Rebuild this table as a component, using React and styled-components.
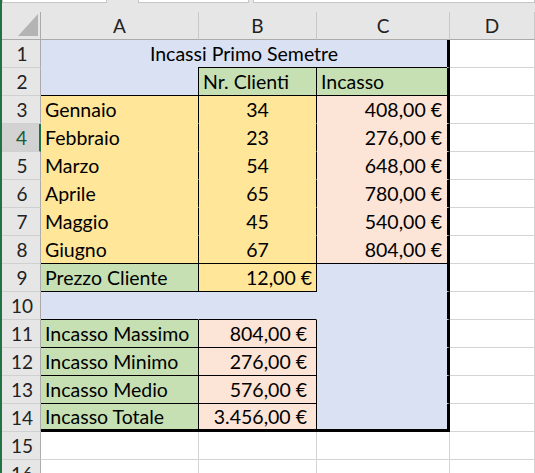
import React from 'react'
import styled, { createGlobalStyle } from 'styled-components'

const BLUE = '#d9e1f2'
const GREEN = '#c6e0b4'
const YELLOW = '#ffe699'
const PEACH = '#fce4d6'
const GRID = '#d4d4d4'
const K = '#000'
const THICK = 'thick'

const GlobalStyle = createGlobalStyle`
  html, body {
    margin: 0;
    padding: 0;
    background: #fff;
    overflow: hidden;
  }
  body {
    font-family: Lato, "Open Sans", sans-serif;
  }
`

const Window = styled.div`
  display: flex;
  width: 535px;
  height: 473px;
  overflow: hidden;
`

const GreenEdge = styled.div`
  width: 2px;
  flex-shrink: 0;
  background: #217346;
`

const Main = styled.div`
  flex: 1;
  overflow: hidden;
  background: #fff;
`

const FormulaStrip = styled.div`
  display: flex;
  gap: 31px;
  height: 3px;
  background: #e6e6e6;
`

const FormulaBox = styled.div`
  box-sizing: border-box;
  height: 3px;
  width: ${({ $w }) => ($w ? `${$w}px` : 'auto')};
  flex: ${({ $w }) => ($w ? 'none' : '1')};
  margin-right: ${({ $mr }) => $mr || 0}px;
  background: #fff;
  border: 1px solid #c6c6c6;
  border-top: none;
`

const HeaderGap = styled.div`
  height: 9px;
  background: #e6e6e6;
`

const Sheet = styled.div`
  display: grid;
  grid-template-columns: 39px 158px 118px 133px 1fr;
  grid-auto-rows: 28px;
`

const ColHead = styled.div`
  box-sizing: border-box;
  display: flex;
  align-items: center;
  justify-content: center;
  background: #e6e6e6;
  border-right: 1px solid ${({ $corner }) => ($corner ? '#ababab' : '#c8c8c8')};
  border-bottom: 1px solid #ababab;
  font-size: 19px;
  color: #222;
  position: relative;
`

const Corner = styled.div`
  position: absolute;
  right: 2px;
  bottom: 3px;
  width: 20px;
  height: 22px;
  background: #b4b4b4;
  clip-path: polygon(100% 0, 100% 100%, 0 100%);
`

const RowHead = styled.div`
  box-sizing: border-box;
  display: flex;
  align-items: center;
  justify-content: center;
  padding-left: 2px;
  background: ${({ $sel }) => ($sel ? '#d2d2d2' : '#e6e6e6')};
  color: ${({ $sel }) => ($sel ? '#185c37' : '#222')};
  border-right: ${({ $sel }) => ($sel ? '2px solid #217346' : '1px solid #ababab')};
  border-bottom: 1px solid #d0d0d0;
  font-size: 19px;
`

const edge = (c) => (c === THICK ? `3px solid ${K}` : `1px solid ${c}`)

const Cell = styled.div`
  box-sizing: border-box;
  position: relative;
  display: flex;
  align-items: center;
  justify-content: ${({ $align }) =>
    $align === 'right' ? 'flex-end' : $align === 'center' ? 'center' : 'flex-start'};
  grid-column: span ${({ $span }) => $span || 1};
  padding: 0 ${({ $pad }) => $pad ?? 4}px 0 4px;
  background: ${({ $fill }) => $fill || '#fff'};
  border-right: ${({ $r }) => edge($r || GRID)};
  border-bottom: ${({ $b }) => edge($b || GRID)};
  font-size: 19.5px;
  color: #000;
  white-space: nowrap;

  /* merged title: its bottom edge turns black where B2:C2 start */
  ${({ $split }) =>
    $split &&
    `&::after {
      content: '';
      position: absolute;
      left: ${$split}px;
      right: 0;
      bottom: -1px;
      height: 1px;
      background: ${K};
    }`}
`

const mesi = [
  ['Gennaio', 34, '408,00 €'],
  ['Febbraio', 23, '276,00 €'],
  ['Marzo', 54, '648,00 €'],
  ['Aprile', 65, '780,00 €'],
  ['Maggio', 45, '540,00 €'],
  ['Giugno', 67, '804,00 €'],
]

const riepilogo = [
  ['Incasso Massimo', '804,00 €'],
  ['Incasso Minimo', '276,00 €'],
  ['Incasso Medio', '576,00 €'],
  ['Incasso Totale', '3.456,00 €'],
]

function buildRows() {
  const rows = []
  rows.push([
    { text: 'Incassi Primo Semetre', fill: BLUE, span: 3, align: 'center', r: THICK, b: BLUE, split: 157 },
  ])
  rows.push([
    { fill: BLUE, r: K, b: K },
    { text: 'Nr. Clienti', fill: GREEN, r: K, b: K },
    { text: 'Incasso', fill: GREEN, r: THICK, b: K },
  ])
  mesi.forEach(([mese, n, euro], i) => {
    const last = i === mesi.length - 1
    rows.push([
      { text: mese, fill: YELLOW, r: K, b: last ? K : YELLOW },
      { text: n, fill: YELLOW, align: 'center', r: K, b: last ? K : YELLOW },
      { text: euro, fill: PEACH, align: 'right', r: THICK, b: last ? K : PEACH, pad: 5 },
    ])
  })
  rows.push([
    { text: 'Prezzo Cliente', fill: GREEN, r: K, b: K },
    { text: '12,00 €', fill: YELLOW, align: 'right', r: K, b: K },
    { fill: BLUE, r: THICK, b: BLUE },
  ])
  rows.push([
    { fill: BLUE, r: BLUE, b: K },
    { fill: BLUE, r: BLUE, b: K },
    { fill: BLUE, r: THICK, b: BLUE },
  ])
  riepilogo.forEach(([label, euro], i) => {
    const last = i === riepilogo.length - 1
    rows.push([
      { text: label, fill: GREEN, r: K, b: last ? THICK : K },
      { text: euro, fill: PEACH, align: 'right', r: K, b: last ? THICK : K, pad: 9 },
      { fill: BLUE, r: THICK, b: last ? THICK : BLUE },
    ])
  })
  rows.push([{}, {}, {}])
  rows.push([{}, {}, {}])
  return rows
}

export default function App() {
  const rows = buildRows()
  return (
    <>
      <GlobalStyle />
      <Window>
        <GreenEdge />
        <Main>
          <FormulaStrip>
            <FormulaBox $w={105} />
            <FormulaBox $w={111} $mr={-27} />
            <FormulaBox />
          </FormulaStrip>
          <HeaderGap />
          <Sheet>
            <ColHead $corner>
              <Corner />
            </ColHead>
            {['A', 'B', 'C', 'D'].map((c) => (
              <ColHead key={c}>{c}</ColHead>
            ))}
            {rows.map((cells, i) => (
              <React.Fragment key={i}>
                <RowHead $sel={i === 3}>{i + 1}</RowHead>
                {cells.map((c, j) => (
                  <Cell
                    key={j}
                    $fill={c.fill}
                    $r={c.r}
                    $b={c.b}
                    $align={c.align}
                    $span={c.span}
                    $split={c.split}
                    $pad={c.pad}
                  >
                    {c.text}
                  </Cell>
                ))}
                <Cell />
              </React.Fragment>
            ))}
          </Sheet>
        </Main>
      </Window>
    </>
  )
}
